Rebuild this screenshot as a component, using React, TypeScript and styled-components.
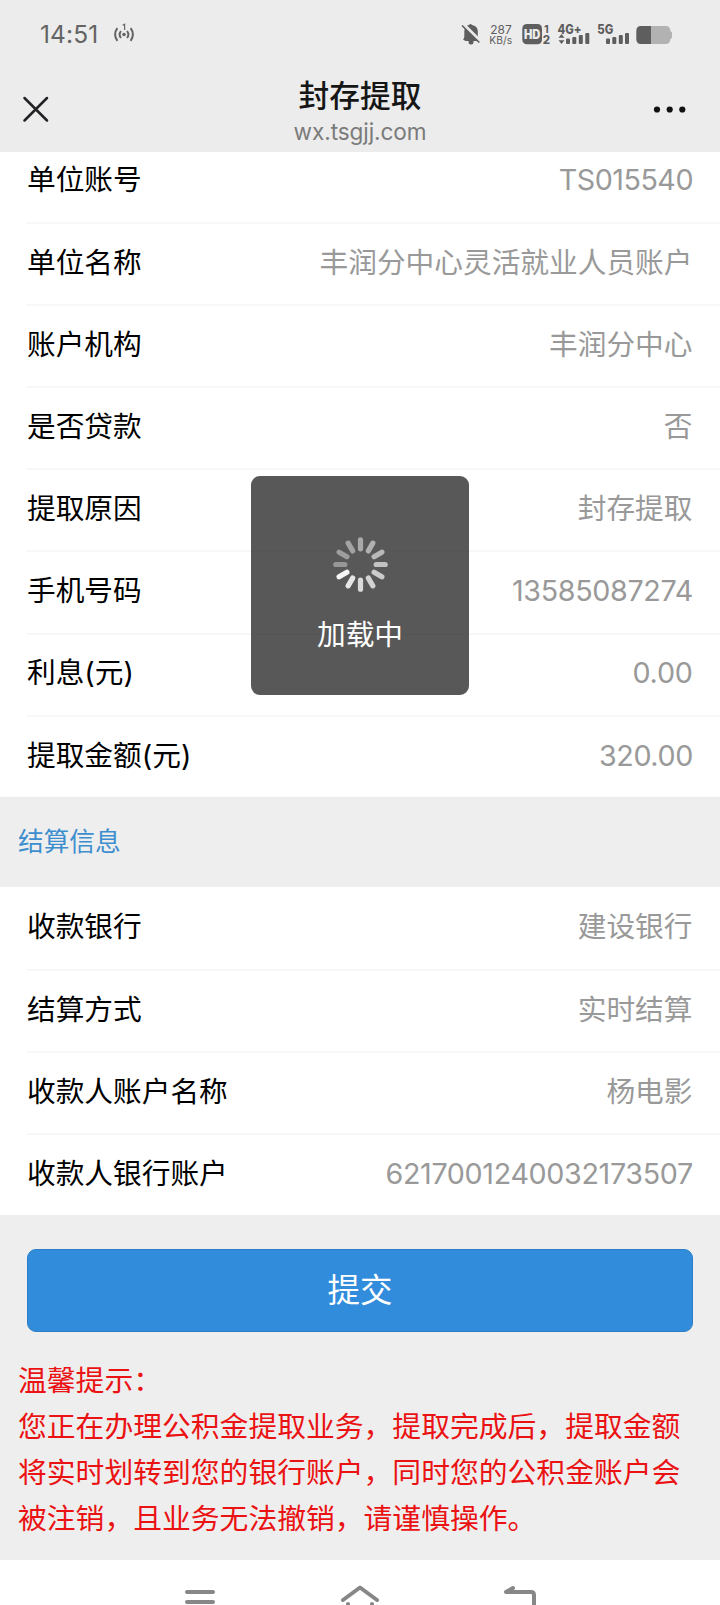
import React from 'react';
import styled, { createGlobalStyle } from 'styled-components';

const GlobalStyle = createGlobalStyle`
  * { box-sizing: border-box; }
  html, body { margin: 0; padding: 0; }
  body {
    background: #eee;
    font-family: Inter, "Noto Sans CJK SC", sans-serif;
    overflow: hidden;
  }
`;

const Screen = styled.div`
  position: relative;
  display: flex;
  flex-direction: column;
  width: 720px;
  height: 1605px;
  overflow: hidden;
  background: #eee;
`;

const Header = styled.header`
  flex: none;
  height: 152px;
  background: #ececec;
`;

const StatusBar = styled.div`
  display: flex;
  align-items: center;
  height: 68px;
  padding: 0 48px 0 40px;
  color: #646464;
`;

const Clock = styled.span`
  width: 60px;
  margin-right: 12px;
  font-size: 24.5px;
  line-height: 30px;
  letter-spacing: 0.1px;
  white-space: nowrap;
`;

const StatusIcons = styled.div`
  display: flex;
  align-items: center;
  margin-left: auto;
  height: 24px;
`;

const TitleBar = styled.div`
  display: grid;
  grid-template-columns: 120px 1fr 120px;
  align-items: center;
  height: 84px;
`;

const CloseButton = styled.button`
  display: flex;
  width: 28px;
  height: 28px;
  margin: -2px 0 0 21px;
  padding: 0;
  border: 0;
  background: none;
`;

const MoreButton = styled(CloseButton)`
  width: 34px;
  margin: -3px 33px 0 auto;
`;

const Heading = styled.div`
  display: flex;
  flex-direction: column;
  align-items: center;
  height: 84px;
  padding-top: 7px;
`;

const Title = styled.h1`
  margin: 0;
  font-size: 30.7px;
  font-weight: 500;
  line-height: 42px;
  color: #161616;
`;

const Domain = styled.span`
  margin-top: 1px;
  font-size: 22.6px;
  line-height: 28px;
  letter-spacing: -0.1px;
  color: #7b7b7b;
`;

const Cells = styled.section<{ $scrolled?: boolean }>`
  flex: none;
  margin-top: ${(p) => (p.$scrolled ? '-12px' : '0')};
  background: #fff;
  position: relative;
  z-index: 0;
  clip-path: ${(p) => (p.$scrolled ? 'inset(12px 0 0 0)' : 'none')};
`;

const Cell = styled.div`
  display: flex;
  justify-content: space-between;
  align-items: center;
  height: 82.1px;
  margin-left: 27px;
  padding: 0 27.5px 1.4px 0;
  & + & { border-top: 2px solid #f7f7f7; padding-bottom: 2.4px; }
`;

const Label = styled.span`
  font-size: 28.7px;
  line-height: 42px;
  color: #000;
`;

const Value = styled.span<{ $spacing?: number }>`
  font-size: 28.7px;
  line-height: 42px;
  letter-spacing: ${(p) => p.$spacing ?? 0}px;
  margin-right: ${(p) => p.$spacing ?? 0}px;
  color: #999;
`;

const SectionTitle = styled.h2`
  flex: none;
  display: flex;
  align-items: center;
  height: 90px;
  margin: 0;
  padding: 0 18px 5px;
  font-size: 25.7px;
  font-weight: 400;
  color: #3d8ecf;
`;

const Submit = styled.button`
  flex: none;
  height: 83px;
  margin: 34px 27px 0;
  padding: 1px 0 0;
  border: 1px solid #2c7fc6;
  border-radius: 9px;
  background: #318cdc;
  color: #fff;
  font: 400 32.5px/44px Inter, "Noto Sans CJK SC", sans-serif;
`;

const Notice = styled.div`
  flex: 1;
  padding: 26px 0 0 18px;
  font-size: 28.8px;
  line-height: 45.9px;
  color: #ea1212;
  white-space: nowrap;
  p { margin: 0; }
`;

const NavBar = styled.nav`
  flex: none;
  display: flex;
  justify-content: center;
  gap: 120px;
  height: 45px;
  padding-top: 23px;
  background: #fff;
  overflow: hidden;
  svg { flex: none; }
`;

const Toast = styled.div`
  position: absolute;
  top: 476px;
  left: 251px;
  z-index: 2;
  display: flex;
  flex-direction: column;
  align-items: center;
  width: 218px;
  height: 219px;
  padding-top: 60px;
  border-radius: 9px;
  background: rgba(17, 17, 17, 0.7);
  color: #fff;
  font-size: 28.7px;
  line-height: 42px;
`;

const ToastText = styled.span`
  margin-top: 21px;
`;

const accountRows = [
  { label: '单位账号', value: 'TS015540', spacing: -0.5 },
  { label: '单位名称', value: '丰润分中心灵活就业人员账户' },
  { label: '账户机构', value: '丰润分中心' },
  { label: '是否贷款', value: '否' },
  { label: '提取原因', value: '封存提取' },
  { label: '手机号码', value: '13585087274', spacing: -0.35 },
  { label: '利息(元)', value: '0.00', spacing: -0.2 },
  { label: '提取金额(元)', value: '320.00', spacing: -0.4 },
];

const settlementRows = [
  { label: '收款银行', value: '建设银行' },
  { label: '结算方式', value: '实时结算' },
  { label: '收款人账户名称', value: '杨电影' },
  { label: '收款人银行账户', value: '6217001240032173507', spacing: -0.35 },
];

const petals = ['#a9a9a9', '#b0b0b0', '#b9b9b9', '#c2c2c2', '#cbcbcb', '#d2d2d2', '#dadada', '#e6e6e6', '#f6f6f6', '#979797', '#9d9d9d', '#a3a3a3'];

const Spinner = () => (
  <svg width="57" height="57" viewBox="-28.5 -28.5 57 57">
    {petals.map((color, i) => (
      <rect key={i} x="-2.6" y="-27.3" width="5.2" height="14.2" rx="2.6" fill={color} transform={`rotate(${i * 30})`} />
    ))}
  </svg>
);

const Hotspot = () => (
  <svg width="24" height="24" viewBox="0 0 24 24" fill="none" stroke="#646464" strokeWidth="2">
    <path d="M5.4 6.2Q.8 12.5 5.4 18.8M9 9Q6.2 12.5 9 16M18.6 6.2Q23.2 12.5 18.6 18.8M15 9Q17.8 12.5 15 16" />
    <circle cx="12" cy="12.5" r="1.8" fill="#646464" stroke="none" />
    <path d="M10.6 3.2L12.6 2.2V8" strokeWidth="1.2" />
  </svg>
);

const Signals = () => (
  <svg width="212" height="24" viewBox="460 21 212 24" fill="#5e5e5e" fontFamily="Inter, sans-serif">
    <path d="M465.500 40L463 38.500Q464.300 37.500 464.300 35.500V30Q465 24.500 469 24Q470.500 22 472 24Q477.500 25 477.800 30V36L480 38.500V40Z" />
    <circle cx="471" cy="41" r="2.500" />
    <path d="M462.500 22.500L480.500 40.500" stroke="#ececec" strokeWidth="3.500" />
    <path d="M462 24.500L479.300 41.500" stroke="#5e5e5e" strokeWidth="1.700" />
    <text x="490.300" y="32.600" fontSize="12" textLength="21.500">287</text>
    <text x="489.300" y="42.600" fontSize="10.500" textLength="22.800" lengthAdjust="spacingAndGlyphs">KB/s</text>
    <rect x="522.300" y="23" width="19.700" height="20.300" rx="4.500" />
    <text x="524" y="37.800" fontSize="12.500" fontWeight="900" fill="#ececec" textLength="16.400" lengthAdjust="spacingAndGlyphs">HD</text>
    <text x="544" y="31.500" fontSize="11" fontWeight="700">1</text>
    <text x="542.700" y="42.900" fontSize="11.500" fontWeight="800">2</text>
    <text x="557.600" y="32.600" fontSize="12.500" fontWeight="800" textLength="24" lengthAdjust="spacingAndGlyphs">4G+</text>
    <path d="M561.500 33L564.500 36.700H558.500ZM561.500 43L564.500 39.300H558.500Z" />
    <rect x="566" y="37.500" width="4" height="5.500" rx="1" />
    <rect x="572.300" y="36" width="4" height="7" rx="1" />
    <rect x="578.800" y="34" width="4" height="9" rx="1" />
    <rect x="585.300" y="32" width="4" height="11" rx="1" />
    <text x="597.300" y="32.600" fontSize="12.500" fontWeight="800" textLength="16" lengthAdjust="spacingAndGlyphs">5G</text>
    <rect x="606" y="37.500" width="4" height="5.500" rx="1" />
    <rect x="612.300" y="36" width="4" height="7" rx="1" />
    <rect x="618.800" y="34" width="4" height="9" rx="1" />
    <rect x="625" y="32" width="4" height="11" rx="1" />
    <path d="M641 25H666Q670 25 670.500 30L672 31.500V36.500L670.500 38Q670 43 666 43H641Z" fill="#b2b2b2" />
    <path d="M651 25H641Q636.300 25 636.300 30V38Q636.300 43 641 43H651Z" />
  </svg>
);

const App = () => (
  <Screen>
    <GlobalStyle />
    <Header>
      <StatusBar>
        <Clock>14:51</Clock>
        <Hotspot />
        <StatusIcons>
          <Signals />
        </StatusIcons>
      </StatusBar>
      <TitleBar>
        <CloseButton aria-label="关闭">
          <svg width="28" height="28" viewBox="0 0 28 28" stroke="#222226" strokeWidth="2.5" strokeLinecap="round">
            <path d="M3.500 3L26 25.500M26 3L3.500 25.500" />
          </svg>
        </CloseButton>
        <Heading>
          <Title>封存提取</Title>
          <Domain>wx.tsgjj.com</Domain>
        </Heading>
        <MoreButton aria-label="更多">
          <svg width="34" height="28" viewBox="0 0 34 28" fill="#111">
            <circle cx="4" cy="14.5" r="3.1" />
            <circle cx="16.7" cy="14.5" r="3.1" />
            <circle cx="29.3" cy="14.5" r="3.1" />
          </svg>
        </MoreButton>
      </TitleBar>
    </Header>
    <Cells $scrolled>
      {accountRows.map((row) => (
        <Cell key={row.label}>
          <Label>{row.label}</Label>
          <Value $spacing={row.spacing}>{row.value}</Value>
        </Cell>
      ))}
    </Cells>
    <SectionTitle>结算信息</SectionTitle>
    <Cells>
      {settlementRows.map((row) => (
        <Cell key={row.label}>
          <Label>{row.label}</Label>
          <Value $spacing={row.spacing}>{row.value}</Value>
        </Cell>
      ))}
    </Cells>
    <Submit>提交</Submit>
    <Notice>
      <p>温馨提示：</p>
      <p>您正在办理公积金提取业务，提取完成后，提取金额</p>
      <p>将实时划转到您的银行账户，同时您的公积金账户会</p>
      <p>被注销，且业务无法撤销，请谨慎操作。</p>
    </Notice>
    <NavBar>
      <svg width="40" height="40" viewBox="180 1583 40 40" stroke="#878787" strokeWidth="4" strokeLinecap="round">
        <path d="M187 1592H213M187 1602H213M187 1612H213" />
      </svg>
      <svg width="40" height="40" viewBox="340 1583 40 40" fill="none" stroke="#878787" strokeWidth="4" strokeLinecap="round" strokeLinejoin="round">
        <path d="M343 1600L360 1587.500L377 1600M348 1604V1616H372V1604" />
      </svg>
      <svg width="40" height="40" viewBox="500 1583 40 40" fill="none" stroke="#878787" strokeWidth="4" strokeLinecap="round" strokeLinejoin="round">
        <path d="M513 1588L506 1592H531Q534 1592 534 1595V1616H506" />
      </svg>
    </NavBar>
    <Toast role="status">
      <Spinner />
      <ToastText>加载中</ToastText>
    </Toast>
  </Screen>
);

export default App;
